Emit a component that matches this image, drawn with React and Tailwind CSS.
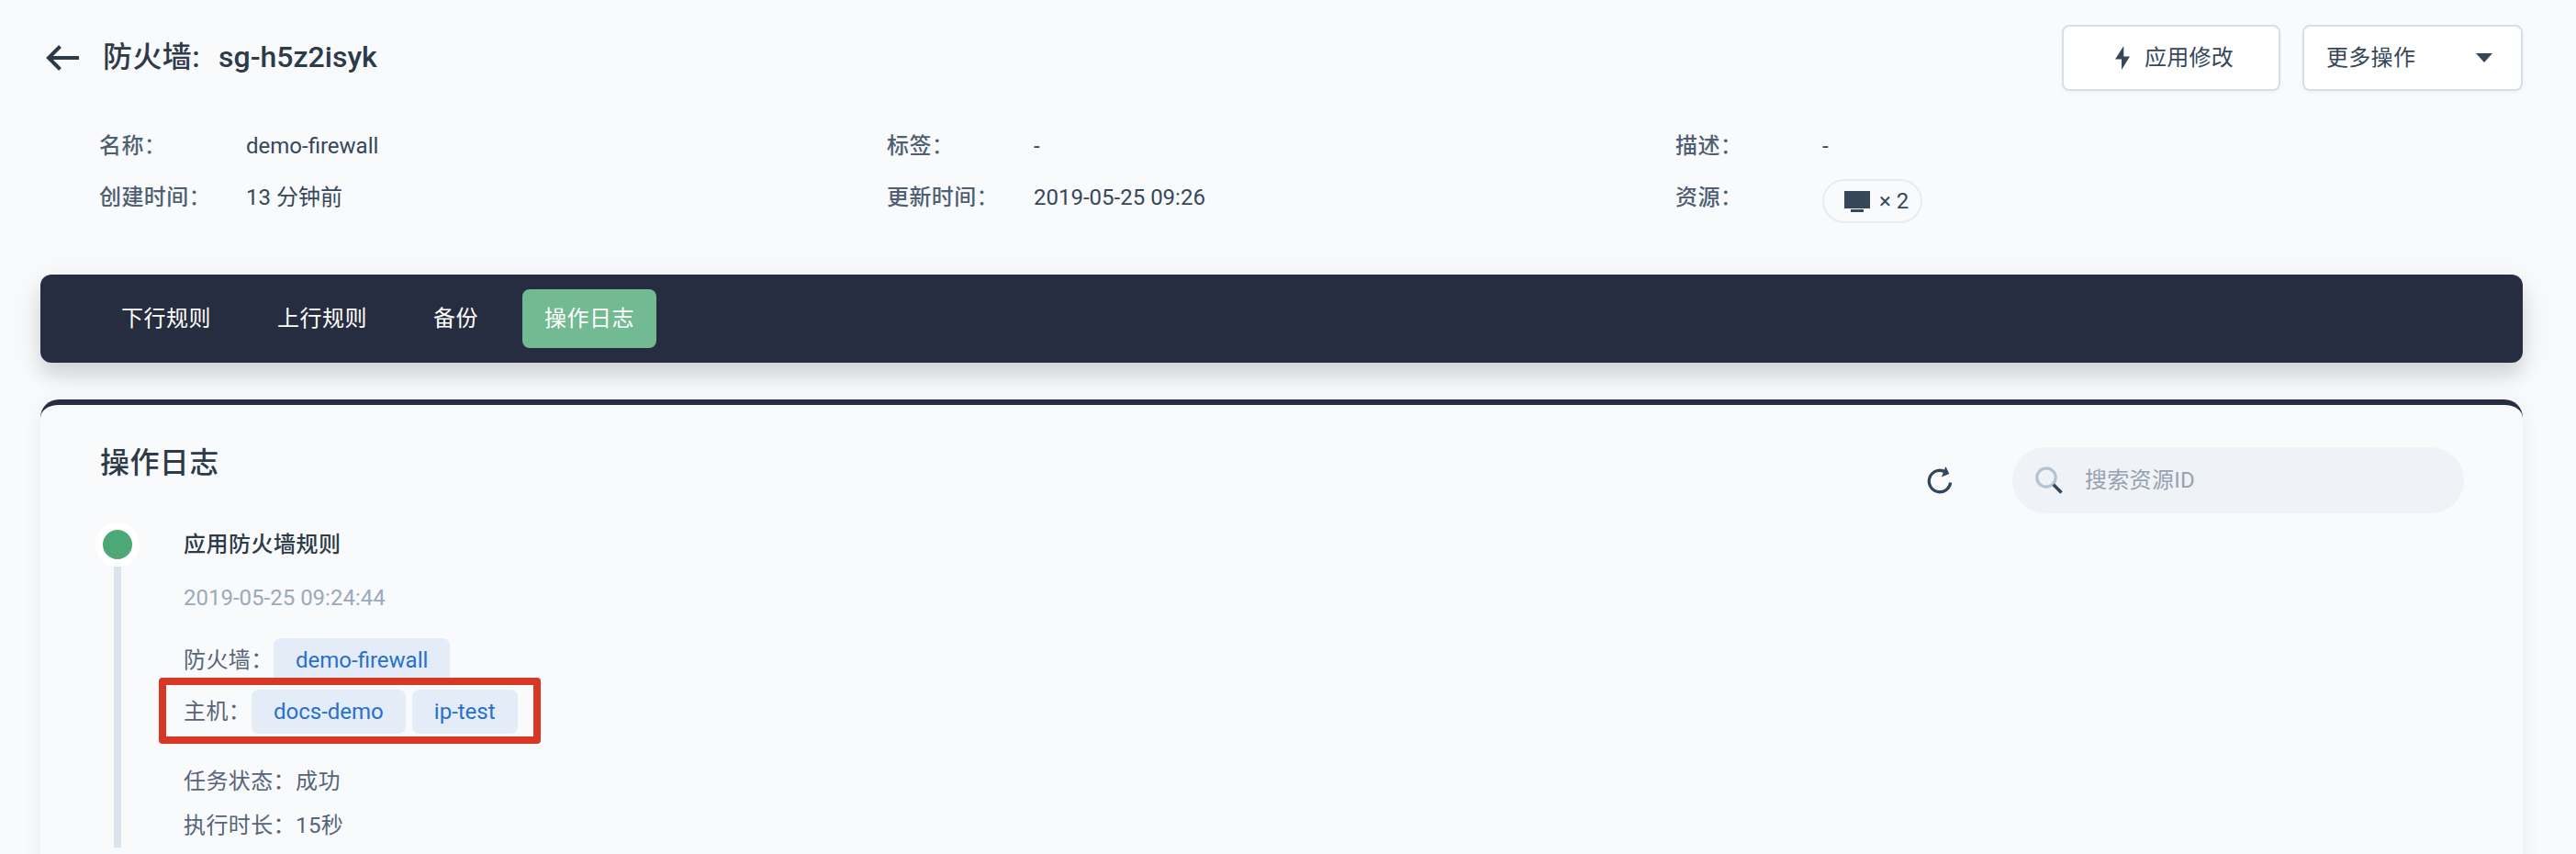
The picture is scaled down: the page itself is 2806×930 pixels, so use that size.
const FONT = "font-['Roboto','Noto_Sans_CJK_SC',sans-serif]";

function Field({ label, children }) {
  return (
    <div className="flex h-14 items-center">
      <div className="w-40 text-[#4f5f73]">
        <span className="font-medium tracking-[0.4px]">{label}</span>
        <span>：</span>
      </div>
      <div className="text-[#36475a]">{children}</div>
    </div>
  );
}

function Tag({ children }) {
  return (
    <span className="flex h-12 items-center rounded-lg bg-[#e4ecf7] px-6 text-[#2870ce]">{children}</span>
  );
}

function Tab({ active, children }) {
  return (
    <div
      className={
        active
          ? "flex h-16 items-center rounded-lg bg-[#72ba91] px-6"
          : "flex h-16 items-center rounded-lg px-6"
      }
    >
      {children}
    </div>
  );
}

export default function App() {
  return (
    <div lang="zh-CN" className={`${FONT} h-[930px] w-[2806px] overflow-hidden bg-[#f9fafc] pl-11 pr-[58px] pt-[27px] text-[24px] leading-[36px] text-[#36475a]`}>
      <header className="flex h-[72px] items-center justify-between">
        <div className="flex items-center pl-1.5 text-[32px] font-medium leading-[48px] text-[#2d3b49]">
          <svg width="36" height="28" viewBox="0 0 36 28" fill="none" stroke="currentColor" strokeWidth="4">
            <path d="M15.500 1.500 3 14l12.500 12.500M3 14h33" />
          </svg>
          <span className="mb-0.5 ml-[26px] tracking-[0.4px]">防火墙:</span>
          <span className="mb-0.5 ml-[20px]">sg-h5z2isyk</span>
        </div>
        <div className="flex gap-6">
          <div className="flex h-[72px] w-[238px] items-center justify-center rounded-lg border-2 border-[#d6dfe7] bg-white pl-[7px] shadow-[0_2px_4px_rgba(0,0,0,0.04)]">
            <svg width="16" height="26" viewBox="0 0 16 26" fill="currentColor">
              <path d="M9.300 0 0 14.500h7V26l9-14.500H9.300z" />
            </svg>
            <span className="ml-4 tracking-[0.3px]">应用修改</span>
          </div>
          <div className="flex h-[72px] w-[240px] items-center justify-between rounded-lg border-2 border-[#d6dfe7] bg-white pl-6 pr-[31px] shadow-[0_2px_4px_rgba(0,0,0,0.04)]">
            <span className="tracking-[0.3px]">更多操作</span>
            <svg width="18" height="10" viewBox="0 0 18 10" fill="currentColor">
              <path d="M0 0h18l-9 10z" />
            </svg>
          </div>
        </div>
      </header>

      <section className="mt-8 flex h-28 pl-16">
        <div className="w-[858px]">
          <Field label="名称">demo-firewall</Field>
          <Field label="创建时间">13 分钟前</Field>
        </div>
        <div className="w-[859px]">
          <Field label="标签">-</Field>
          <Field label="更新时间">2019-05-25 09:26</Field>
        </div>
        <div>
          <Field label="描述">-</Field>
          <Field label="资源">
            <div className="mt-2 flex h-12 w-[109px] items-center rounded-full border-2 border-[#e6ecf3] pl-[22px]">
              <svg width="28" height="23" viewBox="0 0 28 23" fill="currentColor">
                <path d="M0 0h28v19H0zM7 20h14v3H7z" />
              </svg>
              <span className="ml-2.5">× 2</span>
            </div>
          </Field>
        </div>
      </section>

      <nav className="mt-14 flex h-24 items-center gap-6 rounded-xl bg-[#272d40] pl-16 tracking-[0.5px] text-white shadow-[0_14px_20px_rgba(0,0,0,0.11),0_8px_40px_rgba(0,0,0,0.08)]">
        <Tab>下行规则</Tab>
        <Tab>上行规则</Tab>
        <Tab>备份</Tab>
        <Tab active>操作日志</Tab>
      </nav>

      <main className="relative mt-10 h-[600px] rounded-[20px] border-t-[6px] border-[#272d40] bg-[#f9fafc] pl-[60px] pr-16 shadow-[0_4px_24px_rgba(0,0,0,0.06)]">
        <div className="flex justify-between pt-[38px]">
          <h1 className="pl-[5px] pt-px text-[32px] font-medium leading-[48px] tracking-[0.4px] text-[#2d3b49]">操作日志</h1>
          <div className="mt-2 flex items-center">
            <svg className="mr-[65px]" width="28" height="32" viewBox="0 0 28 32" fill="none">
              <path d="M20.400 7.200A11.700 11.700 0 1 0 25.600 18.500" stroke="#33475a" strokeWidth="3.300" />
              <path d="m20.500 1 3.800 8-8.500 3.600z" fill="#33475a" />
            </svg>
            <div className="flex h-[72px] w-[492px] items-center rounded-full bg-[#eff3f8] pl-[25px] text-[#98a2ae]">
              <svg width="30" height="30" viewBox="0 0 30 30" fill="none">
                <circle cx="12" cy="12" r="10.200" stroke="#b6c2cd" strokeWidth="3.200" />
                <path d="m19.800 19.800 8.700 8.700" stroke="#33475a" strokeWidth="3.500" />
              </svg>
              <span className="ml-6 tracking-[0.3px]">搜索资源ID</span>
            </div>
          </div>
        </div>

        <div className="mt-2.5 flex">
          <div className="flex w-12 flex-col items-center">
            <div className="size-12 rounded-full border-8 border-white bg-[#4ca876]" />
            <div className="h-[306px] w-2 bg-[#dbe3ec]" />
          </div>
          <div className="ml-12 text-[#56657a]">
            <div className="flex h-12 items-center font-medium tracking-[0.5px] text-[#2d3b49]">应用防火墙规则</div>
            <div className="mt-4 text-[#9aaabb]">2019-05-25 09:24:44</div>
            <div className="mt-[26px] flex h-12 items-center">
              <span className="w-[98px] whitespace-nowrap tracking-[0.4px]">防火墙：</span>
              <Tag>demo-firewall</Tag>
            </div>
            <div className="relative mt-2 flex h-12 items-center">
              <span className="w-[74px] whitespace-nowrap tracking-[0.4px]">主机：</span>
              <Tag>docs-demo</Tag>
              <span className="ml-[7px]">
                <Tag>ip-test</Tag>
              </span>
              <div className="absolute -left-[27px] -top-[13px] h-[72px] w-[416px] rounded border-8 border-[#d63825]" />
            </div>
            <div className="mt-[28px] flex h-12 items-center tracking-[0.4px]">任务状态：成功</div>
            <div className="flex h-12 items-center tracking-[0.4px]">执行时长：15秒</div>
          </div>
        </div>
      </main>
    </div>
  );
}
